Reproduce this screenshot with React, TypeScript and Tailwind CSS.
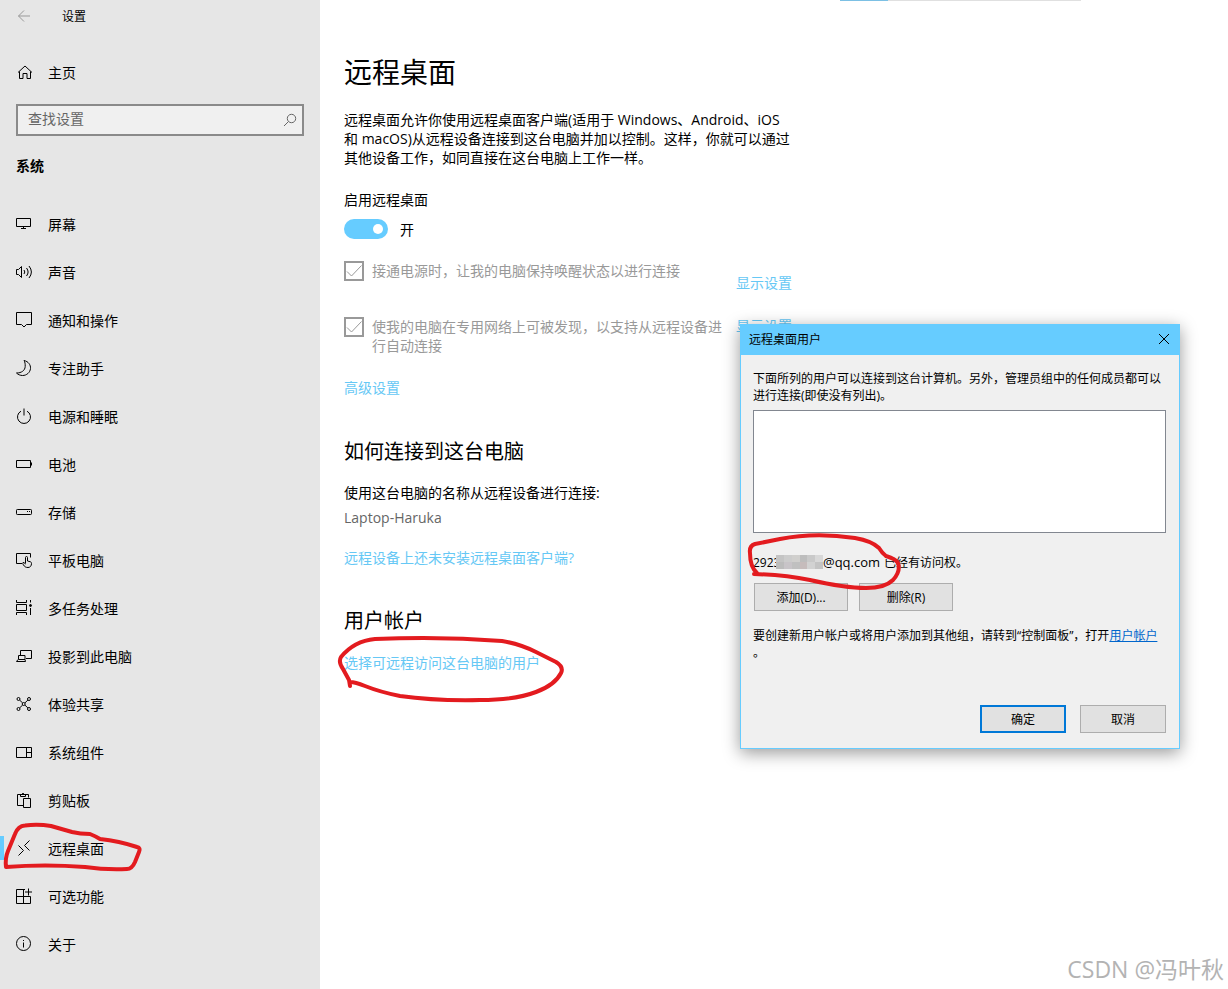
import React, { useState } from 'react';

interface IconProps {
  children: React.ReactNode;
  className?: string;
}

const Icon: React.FC<IconProps> = ({ children, className = '' }) => (
  <svg
    className={`w-4 h-4 shrink-0 overflow-visible ${className}`}
    viewBox="0 0 16 16"
    fill="none"
    stroke="currentColor"
    strokeWidth={1}
    aria-hidden="true"
  >
    {children}
  </svg>
);

interface NavItem {
  label: string;
  icon: React.ReactNode;
}

const navItems: NavItem[] = [
  { label: '屏幕', icon: <path d="M.5 2.5h14v8H.5zM7.5 10.5v2M5 12.5h5" /> },
  {
    label: '声音',
    icon: <path d="M.5 5.5h2l3-3v11l-3-3h-2zM8 6q1.6 2 0 4M10.5 4q3.2 4 0 8M13 2q4.8 6 0 12" />,
  },
  { label: '通知和操作', icon: <path d="M.5.5h15v12h-5L8 15l-2.5-2.5h-5z" /> },
  {
    label: '专注助手',
    icon: <path d="M8 .5C12.5 1.5 14.8 5 14.5 8.5c-.4 4-3.8 7-8 7-2.3 0-4.5-1-6-2.5C5.5 13 9 10.5 9.2 6.5 9.3 4 9 2 8 .5z" />,
  },
  { label: '电源和睡眠', icon: <path d="M8 .5v7M5 3.2a6.5 6.5 0 1 0 6 0" /> },
  { label: '电池', icon: <path d="M.5 4.5h14v7H.5zM15.5 6.5v3" /> },
  {
    label: '存储',
    icon: (
      <>
        <rect x=".5" y="5.5" width="15" height="5" rx=".8" />
        <path d="M11 7.5h1M13 7.5h1" />
      </>
    ),
  },
  {
    label: '平板电脑',
    icon: (
      <path d="M6 11.5H.5v-10h14v4M9.5 11.5v-6a1 1 0 0 1 2 0v3.5l3 .8q1 .4 1 1.7c0 2.500-1.500 4-3.500 4-2.500 0-3.500-1-4.500-2.500-.8-1.200-1-2.200-.5-2.500q.8-.4 2.500 1.500" />
    ),
  },
  {
    label: '多任务处理',
    icon: (
      <>
        <path d="M.5 0v2.500h10V0M.5 15v-2.500h10V15M.5 4.500h10v6H.5zM14.500 0v2.500M14.500 8v7" />
        <circle cx="14.5" cy="5.5" r="1" fill="currentColor" />
      </>
    ),
  },
  { label: '投影到此电脑', icon: <path d="M4.500 7V2.500h11v8H10M2.500 11.500v-4h6.500v4zM2 11.500l-1.500 2h9l-.5-2" /> },
  {
    label: '体验共享',
    icon: (
      <>
        <circle cx="2.5" cy="3" r="1.5" />
        <circle cx="13" cy="3" r="1.5" />
        <circle cx="2.5" cy="13" r="1.5" />
        <circle cx="13" cy="13" r="1.5" />
        <circle cx="7.7" cy="8" r="1.5" />
        <path d="M3.6 4.1l3 2.8M11.9 4.1l-3 2.8M3.6 11.9l3-2.8M11.9 11.9l-3-2.8" />
      </>
    ),
  },
  { label: '系统组件', icon: <path d="M.5 3.5h15v10H.5zM10.5 3.5v10M10.5 8.5h5" /> },
  {
    label: '剪贴板',
    icon: <path d="M7 13.5H1.5v-11h11v3M4.5 4.5v-2h1.5q1-3 2 0h1.5v2zM7.5 6.5h7v9h-7z" />,
  },
  { label: '远程桌面', icon: <path d="M2.5 5.5l5 5-5 5M13.5.5l-5 5 5 5" /> },
  { label: '可选功能', icon: <path d="M9 1.5H.5v14h14V8.5H.5M7.5 1.5v14M12.5.5v7M9 4h7" /> },
  {
    label: '关于',
    icon: (
      <>
        <circle cx="7.5" cy="7.5" r="7" />
        <path d="M7.5 6.5v5M7.5 4v1" />
      </>
    ),
  },
];

interface CheckRowProps {
  label: string;
}

const CheckRow: React.FC<CheckRowProps> = ({ label }) => (
  <label className="flex items-start gap-2 text-[#999999]">
    <span className="relative shrink-0 w-5 h-5">
      <input
        type="checkbox"
        defaultChecked
        disabled
        className="block appearance-none w-5 h-5 border-2 border-[#999999]"
      />
      <svg className="absolute inset-0 w-5 h-5" viewBox="0 0 20 20" fill="none" stroke="currentColor" aria-hidden="true">
        <path d="M3 10.5l4.5 4.5L17.5 4.5" />
      </svg>
    </span>
    <span>{label}</span>
  </label>
);

const Sidebar: React.FC = () => {
  const [active, setActive] = useState('远程桌面');

  return (
    <aside className="w-80 shrink-0 bg-[#e6e6e6]">
      <header className="flex items-center h-8 px-4 gap-[30px]">
        <button aria-label="后退" className="text-[#999999]">
          <Icon>
            <path d="M14 8H2.5M8 2.5L2.5 8 8 13.5" />
          </Icon>
        </button>
        <span className="pt-0.5 text-xs">设置</span>
      </header>

      <a href="#home" className="flex items-center h-12 mt-4 px-4 gap-4">
        <Icon>
          <path d="M2 8.5l7-6.5 7 6.5M3.5 7.5v7h3.5v-5h4v5h3.5v-7" />
        </Icon>
        主页
      </a>

      <div className="flex items-center h-8 mx-4 mt-2 border-2 border-[#8a8a8a] bg-[#f0f0f0] text-[#666666]">
        <input
          type="text"
          aria-label="查找设置"
          placeholder="查找设置"
          className="min-w-0 flex-1 px-2.5 pb-1 bg-transparent outline-none placeholder:text-[#666666]"
        />
        <Icon className="mr-1">
          <circle cx="9.5" cy="6.5" r="4.2" />
          <path d="M6.5 9.5L2 14" />
        </Icon>
      </div>

      <h2 className="mt-5 px-4 leading-5 font-bold">系统</h2>

      <nav className="mt-6">
        {navItems.map((item) => (
          <a
            key={item.label}
            href="#settings"
            onClick={() => setActive(item.label)}
            className="relative flex items-center h-12 px-4 gap-4"
          >
            {item.label === active && <span className="absolute left-0 top-3 w-1 h-6 bg-[#66ccff]"></span>}
            <Icon>{item.icon}</Icon>
            {item.label}
            {item.label === '远程桌面' && (
              <svg
                className="absolute left-0 top-0 w-36 h-12 overflow-visible pointer-events-none"
                viewBox="0 0 144 48"
                fill="none"
                stroke="#e31b1f"
                strokeWidth={4}
                strokeLinecap="round"
                strokeLinejoin="round"
                aria-hidden="true"
              >
                <path d="M6 43Q5 34 8 27L15 10Q18 2 25 1.5Q38 0 51 2L72 8Q80 10 90 10Q95 12 100 15Q119 17 137 23Q141 24 139 28L135 38Q132 45 127 45Q106 46 85 43Q45 40 6 43z" />
              </svg>
            )}
          </a>
        ))}
      </nav>
    </aside>
  );
};

// shades of the censored part of the account name
const mosaic = [
  'bg-[#c4c4c4]', 'bg-[#cccccc]', 'bg-[#d0cfcd]', 'bg-[#bdbdbd]', 'bg-[#c9c9c9]', 'bg-[#d8d8d8]',
  'bg-[#bcbcbc]', 'bg-[#c8c4c8]', 'bg-[#c0c0c0]', 'bg-[#c6bcbc]', 'bg-[#d2d2d2]', 'bg-[#c4c4c4]',
];

const UsersDialog: React.FC = () => (
  <section
    role="dialog"
    aria-label="远程桌面用户"
    className="absolute left-[420px] top-[324px] w-[440px] border border-[#66ccff] bg-[#f0f0f0] text-xs leading-[17px] shadow-[0_4px_16px_rgba(0,0,0,0.4)]"
  >
    <header className="flex items-center justify-between h-[30px] pl-2 pr-[7px] pb-0.5 bg-[#66ccff]">
      <span>远程桌面用户</span>
      <button aria-label="关闭">
        <Icon>
          <path d="M3 3l10 10M13 3L3 13" />
        </Icon>
      </button>
    </header>

    <div className="pl-3 pr-[13px] py-[15px]">
      <p>下面所列的用户可以连接到这台计算机。另外，管理员组中的任何成员都可以进行连接(即使没有列出)。</p>
      <div className="mt-1.5 h-[123px] border border-[#828790] bg-white"></div>

      <div className="relative flex items-center mt-5 h-[18px]">
        <span className="w-[23px]">2923</span>
        <span className="relative grid grid-cols-6 w-[47px] h-3.5">
          {mosaic.map((shade, i) => (
            <span key={i} className={shade}></span>
          ))}
        </span>
        <span className="text-[13px]">@qq.com</span>
        <span className="ml-1">已经有访问权。</span>
        <svg
          className="absolute -left-1 -top-4 w-[150px] h-[54px] z-10 overflow-visible pointer-events-none"
          viewBox="749 537 150 54"
          fill="none"
          stroke="#e31b1f"
          strokeWidth={4}
          strokeLinecap="round"
          strokeLinejoin="round"
          aria-hidden="true"
        >
          <path d="M754 574Q785 575 810 580Q845 588 866 588Q885 588 893 580Q901 571 898 563Q896 559 886 556Q882 553 879 548Q872 541 855 538Q815 532 780 539L755 544Q749 546 750 553Q750 567 757 573" />
        </svg>
      </div>

      <div className="flex gap-[11px] mt-3 ml-px">
        <button className="w-[94px] h-7 border border-[#adadad] bg-[#e1e1e1]">添加(D)...</button>
        <button className="w-[94px] h-7 border border-[#adadad] bg-[#e1e1e1]">删除(R)</button>
      </div>

      <p className="mt-4">
        要创建新用户帐户或将用户添加到其他组，请转到“控制面板”，打开
        <a href="#accounts" className="text-[#0066cc] underline">用户帐户</a>
        <br />。
      </p>

      <div className="flex justify-end gap-3.5 mt-11">
        <button className="w-[86px] h-7 border-2 border-[#0078d7] bg-[#e1e1e1]">确定</button>
        <button className="w-[86px] h-7 border border-[#adadad] bg-[#e1e1e1]">取消</button>
      </div>
    </div>
  </section>
);

const App: React.FC = () => {
  const [enabled, setEnabled] = useState(true);

  return (
    <div className="relative flex min-h-screen overflow-hidden bg-white text-black text-sm leading-[19px] font-['Open_Sans','Noto_Sans_CJK_SC',sans-serif]">
      <Sidebar />

      <main className="relative flex-1 min-w-0">
        {/* Edge of the progress bar above the page */}
        <div className="flex h-px pl-[520px]">
          <div className="w-12 bg-[#7cc0e4]"></div>
          <div className="w-[193px] bg-[#e0e0e0]"></div>
        </div>

        <div className="pl-6 pt-[53px] pb-8">
          <h1 className="text-[28px] leading-9">远程桌面</h1>
          <p className="max-w-[448px] mt-5">
            远程桌面允许你使用远程桌面客户端(适用于 Windows、Android、iOS 和 macOS)从远程设备连接到这台电脑并加以控制。这样，你就可以通过其他设备工作，如同直接在这台电脑上工作一样。
          </p>

          <p id="enable-label" className="mt-[23px]">启用远程桌面</p>
          <div className="flex items-center gap-3 mt-2.5 h-5">
            <button
              role="switch"
              aria-checked={enabled}
              aria-labelledby="enable-label"
              onClick={() => setEnabled(!enabled)}
              className={`flex items-center w-11 h-5 px-[5px] rounded-full ${enabled ? 'justify-end bg-[#66ccff]' : 'justify-start bg-gray-400'}`}
            >
              <span className="w-2.5 h-2.5 rounded-full bg-white"></span>
            </button>
            <span>{enabled ? '开' : '关'}</span>
          </div>

          <div className="flex gap-3">
            <div className="w-[380px] pt-[22px] flex flex-col gap-9">
              <CheckRow label="接通电源时，让我的电脑保持唤醒状态以进行连接" />
              <CheckRow label="使我的电脑在专用网络上可被发现，以支持从远程设备进行自动连接" />
            </div>
            <div className="flex flex-col items-start gap-6 pt-[34px] text-[#66c8f5]">
              <a href="#display">显示设置</a>
              <a href="#network">显示设置</a>
            </div>
          </div>
          <a href="#advanced" className="inline-block mt-[23px] text-[#66c8f5]">高级设置</a>

          <h2 className="mt-[41px] text-xl leading-7">如何连接到这台电脑</h2>
          <p className="mt-[17px]">使用这台电脑的名称从远程设备进行连接:</p>
          <p className="mt-1.5 text-[#666666]">Laptop-Haruka</p>
          <a href="#client" className="inline-block mt-[21px] text-[#66c8f5]">远程设备上还未安装远程桌面客户端?</a>

          <h2 className="mt-10 text-xl leading-7">用户帐户</h2>
          <div className="relative mt-[18px]">
            <a href="#users" className="text-[#66c8f5]">选择可远程访问这台电脑的用户</a>
            <svg
              className="absolute -left-1 -top-4 w-[224px] h-[64px] overflow-visible pointer-events-none"
              viewBox="340 637 224 64"
              fill="none"
              stroke="#e31b1f"
              strokeWidth={4}
              strokeLinecap="round"
              strokeLinejoin="round"
              aria-hidden="true"
            >
              <path d="M350 686L349 680L343 669Q338 662 341 657Q354 641 375 639Q440 636 502 641Q520 644 536 652L556 662Q564 667 561 673Q555 685 536 692Q515 700 480 700Q435 701 400 696Q380 692 365 686Q355 682 350 682" />
            </svg>
          </div>
        </div>

        <UsersDialog />

        <div className="absolute right-1 bottom-1 text-[23px] leading-8 text-[#b3b3b3] whitespace-nowrap">CSDN @冯叶秋</div>
      </main>
    </div>
  );
};

export default App;
